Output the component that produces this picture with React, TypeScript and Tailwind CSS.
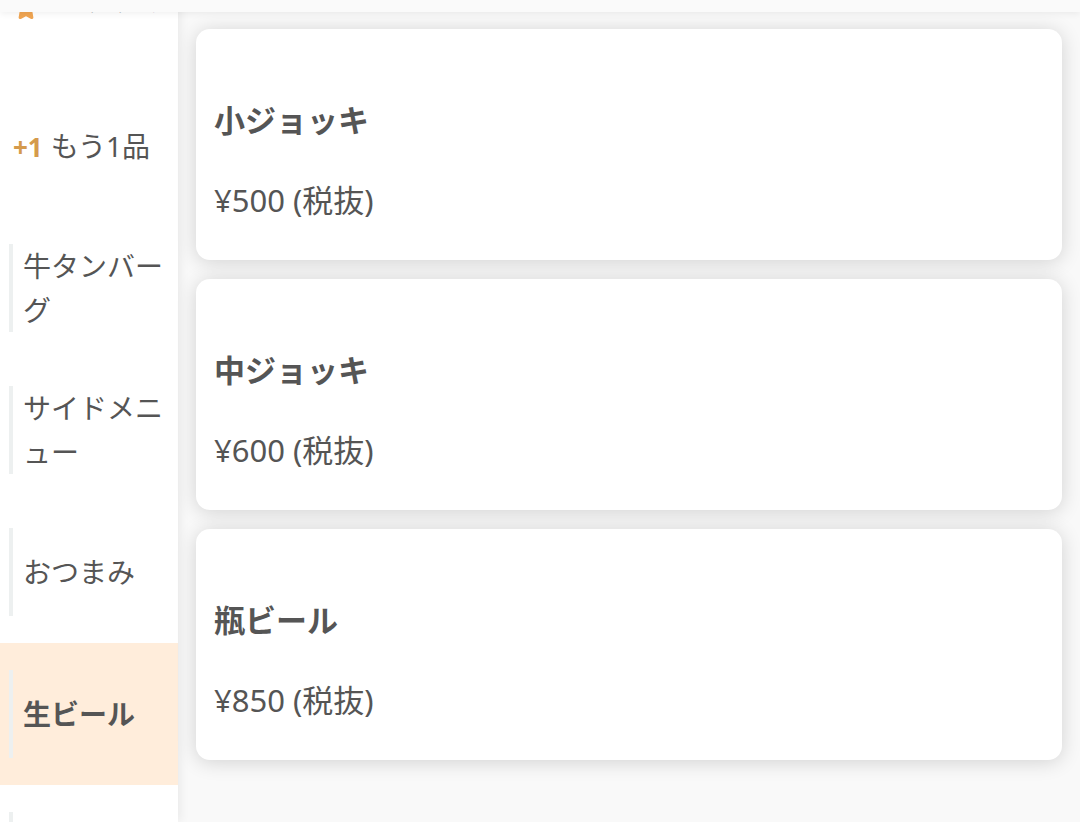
import { Star } from 'lucide-react';

// Sidebar categories, in scroll order
const categories = [
  { id: 'recommend', label: 'おすすめ', icon: 'star' },
  { id: 'more', label: 'もう1品', icon: 'plus' },
  { id: 'gyutan', label: '牛タンバーグ' },
  { id: 'side', label: 'サイドメニュー' },
  { id: 'otsumami', label: 'おつまみ' },
  { id: 'beer', label: '生ビール', active: true },
  { id: 'drink', label: 'ドリンク' },
];

const items = [
  { name: '小ジョッキ', price: 500 },
  { name: '中ジョッキ', price: 600 },
  { name: '瓶ビール', price: 850 },
];

function CategoryItem({ label, icon, active }: { label: string; icon?: string; active?: boolean }) {
  return (
    <div className={`py-[27px] pl-[9px] pr-1 ${active ? 'bg-[#ffeddb]' : ''}`}>
      <div
        className={`flex min-h-[88px] ${
          icon === 'star' ? 'items-start pl-[5px] pt-[18px]' : icon ? 'items-center pl-1' : 'items-center border-l-4 border-[#edf0f0] pl-[10px]'
        }`}
      >
        {icon === 'star' && <Star className="w-[24px] h-[24px] mt-[19px] mr-4 text-[#f0a552] fill-[#f0a552]" />}
        <span className={`text-[28px] leading-[44px] ${active ? 'font-bold' : ''}`}>
          {icon === 'plus' && <span className="text-[26px] text-[#d59a4c] font-bold mr-[8px]">+1</span>}
          {label}
        </span>
      </div>
    </div>
  );
}

export default function App() {
  return (
    <div
      className="relative h-[822px] overflow-hidden bg-[#f9f9f9] text-[#555555]"
      style={{ fontFamily: '"Noto Sans", "Noto Sans CJK JP", sans-serif' }}
    >
      {/* header bar over the scrolled content */}
      <div className="absolute top-0 left-0 right-0 h-3 bg-[#fafafa] shadow-[0_2px_6px_rgba(0,0,0,0.06)] z-10" />

      <div className="flex h-full">
        <aside className="w-[178px] shrink-0 bg-white shadow-[2px_0_10px_rgba(0,0,0,0.07)] overflow-hidden">
          <div className="-mt-[67px]">
            {categories.map((c) => (
              <CategoryItem key={c.id} label={c.label} icon={c.icon} active={c.active} />
            ))}
          </div>
        </aside>

        <main className="flex-1 pt-[29px] pl-[18px] pr-[18px] flex flex-col gap-[19px]">
          {items.map((item) => (
            <div
              key={item.name}
              className="h-[231px] shrink-0 bg-white rounded-[14px] shadow-[0_2px_20px_rgba(0,0,0,0.16)] pl-[18px] pt-[70px]"
            >
              <div className="text-[31px] leading-[42px] font-bold">{item.name}</div>
              <div className="mt-[39px] text-[31px] leading-[40px]">¥{item.price} (税抜)</div>
            </div>
          ))}
        </main>
      </div>
    </div>
  );
}
